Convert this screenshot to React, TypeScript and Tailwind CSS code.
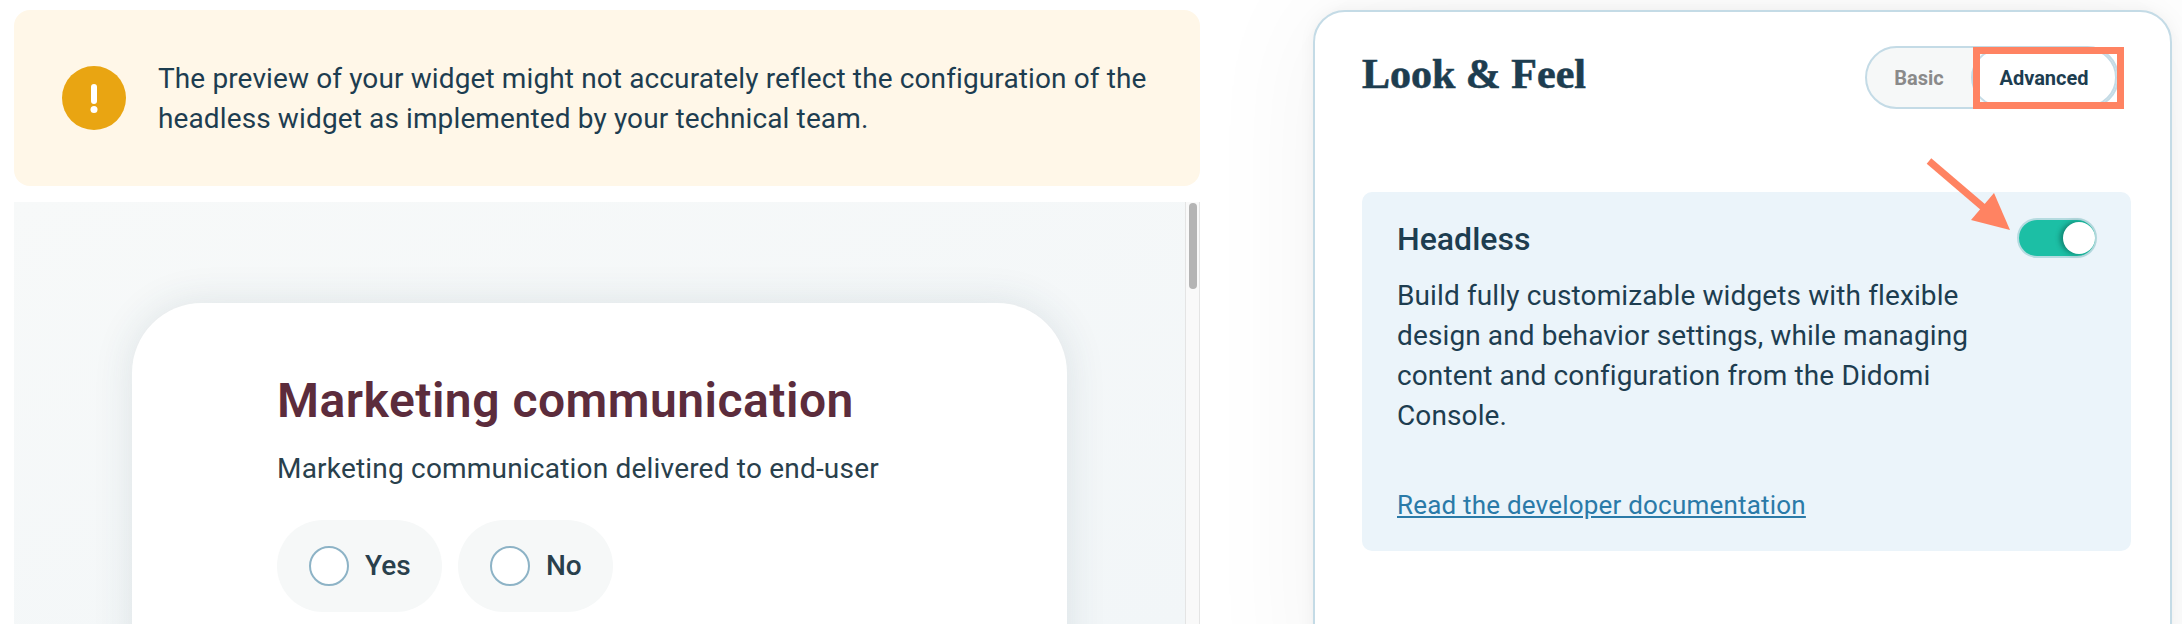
function WarningIcon() {
  return (
    <svg width="64" height="64" viewBox="0 0 64 64" className="shrink-0">
      <circle cx="32" cy="32" r="32" fill="#e9a512" />
      <rect x="29" y="18" width="6" height="20" rx="3" fill="#fff" />
      <circle cx="32" cy="43.5" r="3.5" fill="#fff" />
    </svg>
  );
}

function RadioPill({ label, width }: { label: string; width: string }) {
  return (
    <div className={`flex h-[92px] items-center gap-4 rounded-[46px] bg-[#f6f8f8] pl-8 ${width}`}>
      <div className="h-10 w-10 rounded-full border-2 border-[#8db3c6] bg-white" />
      <span className="text-[28px] font-medium text-[#29404c]">{label}</span>
    </div>
  );
}

function Annotations() {
  return (
    <>
      <div className="absolute left-[1973px] top-[47px] h-[62px] w-[151px] border-[7px] border-[#ff8362]" />
      <svg className="absolute left-[1920px] top-[150px]" width="100" height="90" viewBox="0 0 100 90">
        <path d="M9 11 L64 58" stroke="#ff8362" strokeWidth="7" fill="none" />
        <polygon points="74,43 90,80 51,70" fill="#ff8362" />
      </svg>
    </>
  );
}

export default function App() {
  return (
    <div className="relative flex h-[624px] w-[2182px] overflow-hidden bg-white font-['Roboto',sans-serif] text-[#1d3d50]">
      <div className="flex w-[1200px] shrink-0 flex-col pl-[14px] pt-[10px]">
        <div className="flex h-[176px] w-full shrink-0 items-center gap-8 rounded-[16px] bg-[#fff7e8] pl-12">
          <WarningIcon />
          <p className="pt-[2px] text-[28px] leading-[40px] tracking-[0.12px]">
            The preview of your widget might not accurately reflect the configuration of the
            <br />
            headless widget as implemented by your technical team.
          </p>
        </div>
        <div className="mt-4 flex w-full flex-1 overflow-hidden bg-gradient-to-br from-[#f7f9f9] to-[#f2f6f8]">
          <div className="flex-1 pl-[118px] pt-[101px]">
            <div className="h-[500px] w-[935px] rounded-[70px] bg-white pl-[145px] pt-[70px] shadow-[0_0_40px_rgba(40,70,90,0.12)]">
              <h2 className="text-[48px] font-semibold leading-[56px] tracking-[0.5px] text-[#5c2c3c]">Marketing communication</h2>
              <p className="mt-[20px] text-[28px] leading-[40px] tracking-[0.2px] text-[#29404c]">Marketing communication delivered to end-user</p>
              <div className="mt-[31px] flex gap-4">
                <RadioPill label="Yes" width="w-[165px]" />
                <RadioPill label="No" width="w-[155px]" />
              </div>
            </div>
          </div>
          <div className="flex w-[15px] shrink-0 justify-center border-x border-[#e4e4e4] bg-[#f9f9f9] pt-px">
            <div className="h-[86px] w-2 rounded bg-[#b4b4b4]" />
          </div>
        </div>
      </div>

      <div className="ml-[113px] mt-[10px] h-[700px] w-[859px] shrink-0 rounded-[32px] border-2 border-[#c4dbe6] bg-white pl-[47px] pr-[39px] shadow-[0_0_16px_rgba(0,0,0,0.05),0_0_120px_rgba(0,0,0,0.05)]">
        <div className="flex items-start justify-between pr-[12px] pt-[34px]">
          <h1 className="mt-[3px] font-['Liberation_Serif',serif] text-[42px] font-bold leading-[50px] [-webkit-text-stroke:0.6px_#1d3d50]">Look &amp; Feel</h1>
          <div className="flex h-[63px] w-[254px] items-stretch rounded-full border-2 border-[#c4dbe6] bg-[#f6f8f8]">
            <span className="flex w-[104px] items-center justify-center text-[20px] font-bold text-[#8a8a8a]">Basic</span>
            <span className="flex flex-1 items-center justify-center rounded-full border-2 border-[#c4dbe6] bg-white text-[20px] font-bold">Advanced</span>
          </div>
        </div>
        <div className="mt-[83px] h-[359px] rounded-[10px] bg-[#ebf4fa] pl-[35px] pr-[34px] pt-[26px]">
          <div className="flex items-start justify-between">
            <h3 className="text-[32px] font-medium leading-[42px]">Headless</h3>
            <div className="flex h-[40px] w-[80px] items-center justify-end rounded-full border-2 border-[#b5dbe0] bg-[#1cbfa5]">
              <div className="h-8 w-8 rounded-full bg-white shadow-[-3px_0_5px_rgba(0,60,50,0.45)]" />
            </div>
          </div>
          <p className="mt-[16px] w-[600px] text-[28px] leading-[40px] tracking-[0.12px]">
            Build fully customizable widgets with flexible design and behavior settings, while managing content and configuration from the Didomi Console.
          </p>
          <a className="mt-[49px] block text-[26px] leading-[40px] tracking-[0.2px] text-[#2a7aa8] underline">Read the developer documentation</a>
        </div>
      </div>

      <Annotations />
    </div>
  );
}
